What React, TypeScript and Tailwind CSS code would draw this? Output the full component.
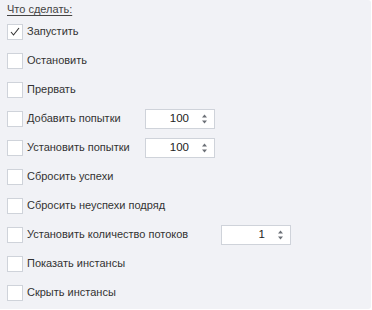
import { useState } from "react";

type Row = { label: string; checked?: boolean; value?: number; inputWide?: boolean };

const rows: Row[] = [
  { label: "Запустить", checked: true },
  { label: "Остановить" },
  { label: "Прервать" },
  { label: "Добавить попытки", value: 100 },
  { label: "Установить попытки", value: 100 },
  { label: "Сбросить успехи" },
  { label: "Сбросить неуспехи подряд" },
  { label: "Установить количество потоков", value: 1, inputWide: true },
  { label: "Показать инстансы" },
  { label: "Скрыть инстансы" },
];

function Spin({ value }: { value: number }) {
  return (
    <div className="flex h-[20px] w-[70px] items-center border border-[#cfd3da] bg-white">
      <span className="flex-1 pr-[12px] text-right text-[11.5px] text-[#222]">{value}</span>
      <svg width="7" height="12" viewBox="0 0 7 12" className="mr-[6px]">
        <path d="M3.5 1.5 L6 4.5 H1 Z" fill="#6b6f76" />
        <path d="M3.5 10.5 L6 7.5 H1 Z" fill="#6b6f76" />
      </svg>
    </div>
  );
}

export default function App() {
  const [state, setState] = useState(rows.map(r => !!r.checked));

  return (
    <div className="h-[310px] w-[372px] bg-white" style={{ fontFamily: '"Liberation Sans", Arial, sans-serif' }}>
      <div className="h-[309px] w-[371px] rounded-r-[3px] bg-[#f1f2f6] pl-[7px] pt-[1px]">
        <div className="text-[11px] leading-[16px] text-[#444] underline underline-offset-2">Что сделать:</div>
        <div className="flex flex-col">
          {rows.map((r, i) => (
            <div key={r.label} className="flex h-[29px] items-center">
              <button
                onClick={() => setState(s => s.map((v, j) => (j === i ? !v : v)))}
                className="flex h-[16px] w-[16px] items-center justify-center border border-[#cfd3da] bg-white"
              >
                {state[i] && (
                  <svg width="10" height="9" viewBox="0 0 10 9">
                    <path d="M1 5 L3.5 8 L9 1" fill="none" stroke="#333" strokeWidth="1.1" />
                  </svg>
                )}
              </button>
              <span className={r.value !== undefined ? (r.inputWide ? "ml-[4px] w-[194px] text-[11px] text-[#333]" : "ml-[4px] w-[118px] text-[11px] text-[#333]") : "ml-[4px] text-[11px] text-[#333]"}>
                {r.label}
              </span>
              {r.value !== undefined && <Spin value={r.value} />}
            </div>
          ))}
        </div>
      </div>
    </div>
  );
}
